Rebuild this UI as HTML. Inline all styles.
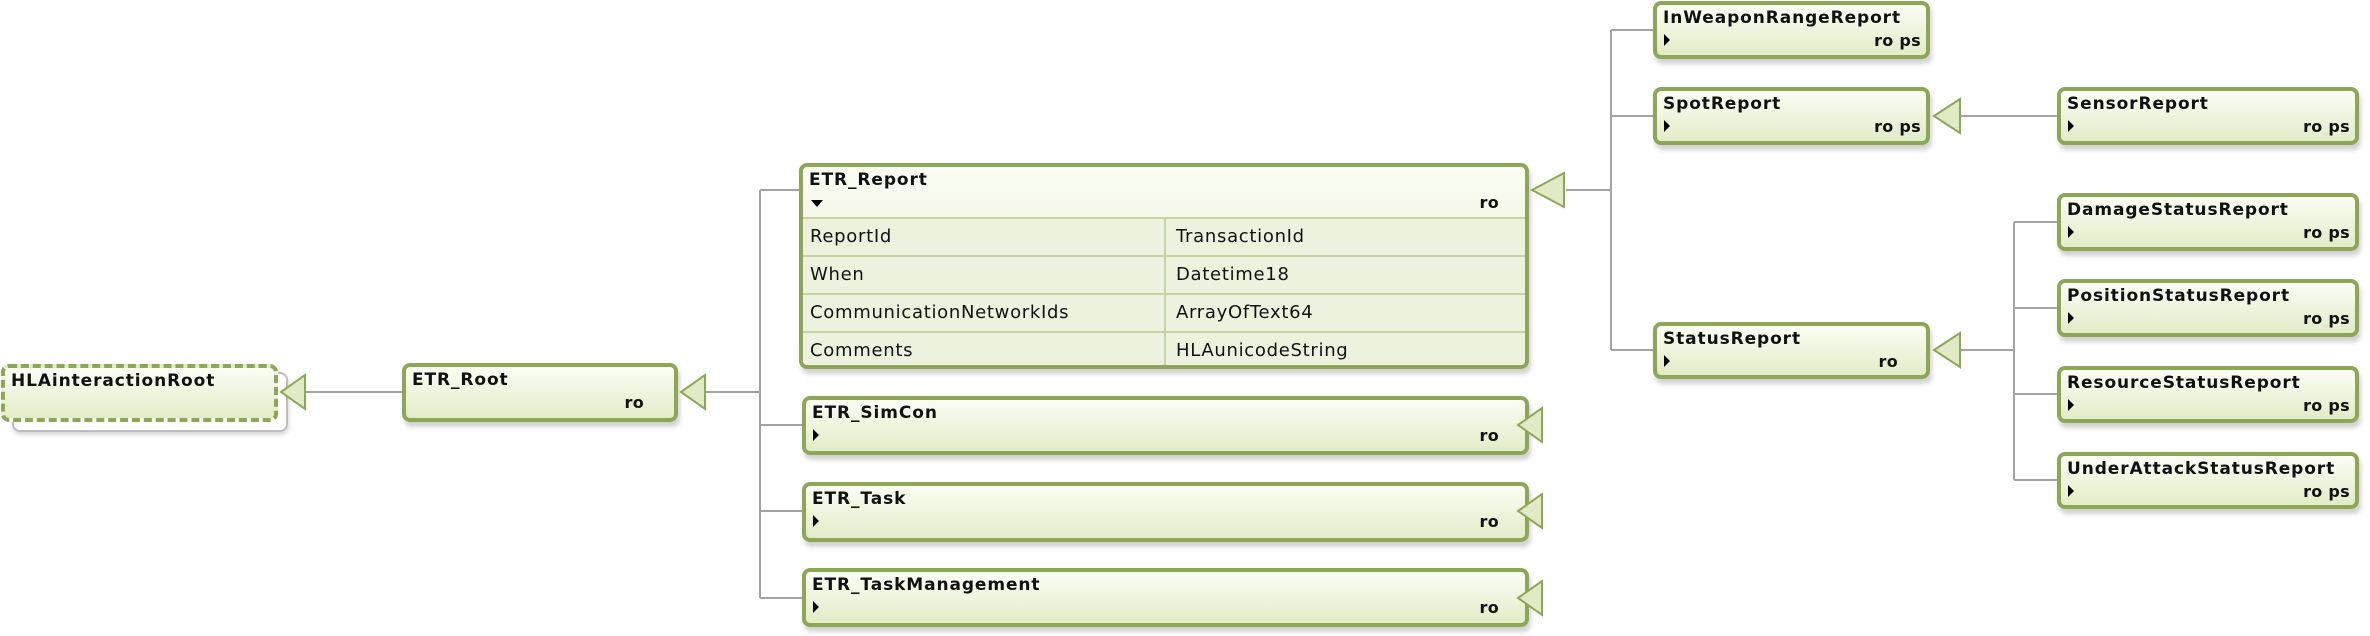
<!DOCTYPE html>
<html><head><meta charset="utf-8"><style>
body{margin:0;width:2370px;height:636px;background:#fff;position:relative;overflow:hidden;font-family:"DejaVu Sans","Liberation Sans",sans-serif;}
.box{position:absolute;box-sizing:border-box;border:4px solid #8ea756;border-radius:8px;background:linear-gradient(#fbfdf4,#e2ecc7);box-shadow:2px 5px 5px rgba(0,0,0,.18);}
.t{position:absolute;left:6px;top:3px;font-size:17px;font-weight:bold;letter-spacing:0.9px;color:#111;white-space:nowrap;}
.tri{position:absolute;left:7px;top:29px;width:0;height:0;border-top:6px solid transparent;border-bottom:6px solid transparent;border-left:6px solid #000;}
.ro{position:absolute;top:26px;font-size:16px;font-weight:bold;color:#111;white-space:nowrap;letter-spacing:0.3px;}
.row{position:absolute;left:0;right:0;height:38px;border-top:2px solid #c3d4a2;background:#edf2de;font-size:18px;letter-spacing:0.7px;color:#111;}
.row span{position:absolute;top:7px;white-space:nowrap;}
</style></head><body>

<!-- HLA shadow box -->
<div style="position:absolute;left:12px;top:372px;width:276px;height:60px;border:2px solid #bdbdbd;border-radius:8px;background:#fff;box-sizing:border-box;box-shadow:1px 3px 4px rgba(0,0,0,.15)"></div>
<div class="box" style="left:1px;top:364px;width:277px;height:58px;border:4px dashed #8ea756;box-shadow:none"><div class="t">HLAinteractionRoot</div></div>

<div class="box" style="left:402px;top:363px;width:276px;height:59px"><div class="t">ETR_Root</div><div class="ro" style="right:30px">ro</div></div>

<!-- ETR_Report -->
<div class="box" style="left:799px;top:163px;width:730px;height:206px;overflow:hidden">
<div class="t">ETR_Report</div>
<div style="position:absolute;left:8px;top:33px;width:0;height:0;border-left:6px solid transparent;border-right:6px solid transparent;border-top:7px solid #000"></div>
<div class="ro" style="right:26px">ro</div>
<div class="row" style="top:50px"><span style="left:7px">ReportId</span><span style="left:373px">TransactionId</span></div>
<div class="row" style="top:88px"><span style="left:7px">When</span><span style="left:373px">Datetime18</span></div>
<div class="row" style="top:126px"><span style="left:7px">CommunicationNetworkIds</span><span style="left:373px">ArrayOfText64</span></div>
<div class="row" style="top:164px"><span style="left:7px">Comments</span><span style="left:373px">HLAunicodeString</span></div>
<div style="position:absolute;left:361px;top:50px;width:2px;height:160px;background:#c3d4a2"></div>
</div>

<div class="box" style="left:802px;top:396px;width:727px;height:59px"><div class="t">ETR_SimCon</div><div class="tri"></div><div class="ro" style="right:26px">ro</div></div>
<div class="box" style="left:802px;top:482px;width:727px;height:60px"><div class="t">ETR_Task</div><div class="tri"></div><div class="ro" style="right:26px">ro</div></div>
<div class="box" style="left:802px;top:568px;width:727px;height:59px"><div class="t">ETR_TaskManagement</div><div class="tri"></div><div class="ro" style="right:26px">ro</div></div>

<div class="box" style="left:1653px;top:1px;width:277px;height:58px"><div class="t">InWeaponRangeReport</div><div class="tri"></div><div class="ro" style="right:5px">ro ps</div></div>
<div class="box" style="left:1653px;top:87px;width:277px;height:58px"><div class="t">SpotReport</div><div class="tri"></div><div class="ro" style="right:5px">ro ps</div></div>
<div class="box" style="left:1653px;top:322px;width:277px;height:57px"><div class="t">StatusReport</div><div class="tri"></div><div class="ro" style="right:28px">ro</div></div>

<div class="box" style="left:2057px;top:87px;width:302px;height:58px"><div class="t">SensorReport</div><div class="tri"></div><div class="ro" style="right:5px">ro ps</div></div>
<div class="box" style="left:2057px;top:193px;width:302px;height:58px"><div class="t">DamageStatusReport</div><div class="tri"></div><div class="ro" style="right:5px">ro ps</div></div>
<div class="box" style="left:2057px;top:279px;width:302px;height:58px"><div class="t">PositionStatusReport</div><div class="tri"></div><div class="ro" style="right:5px">ro ps</div></div>
<div class="box" style="left:2057px;top:366px;width:302px;height:57px"><div class="t">ResourceStatusReport</div><div class="tri"></div><div class="ro" style="right:5px">ro ps</div></div>
<div class="box" style="left:2057px;top:452px;width:302px;height:57px"><div class="t">UnderAttackStatusReport</div><div class="tri"></div><div class="ro" style="right:5px">ro ps</div></div>

<svg style="position:absolute;left:0;top:0" width="2370" height="636">
<g stroke="#a3a3a3" stroke-width="2" fill="none">
<path d="M305 392H402"/>
<path d="M705 392H760M760 190V598M760 190H799M760 425H802M760 511H802M760 598H802"/>
<path d="M1566 190H1611M1611 30V350M1611 30H1653M1611 116H1653M1611 350H1653"/>
<path d="M1961 116H2057"/>
<path d="M1961 350H2014M2014 222V480M2014 222H2057M2014 308H2057M2014 394H2057M2014 480H2057"/>
</g>
<g fill="#e0ebc5" stroke="#8ea756" stroke-width="2" stroke-linejoin="miter">
<path d="M281 392L305 375V409Z"/>
<path d="M681 392L705 375V409Z"/>
<path d="M1532 190L1564 173V207Z"/>
<path d="M1518 425L1542 408V442Z"/>
<path d="M1518 511L1542 494V528Z"/>
<path d="M1518 598L1542 581V615Z"/>
<path d="M1934 116L1960 99V133Z"/>
<path d="M1934 350L1960 333V367Z"/>
</g>
</svg>
</body></html>
